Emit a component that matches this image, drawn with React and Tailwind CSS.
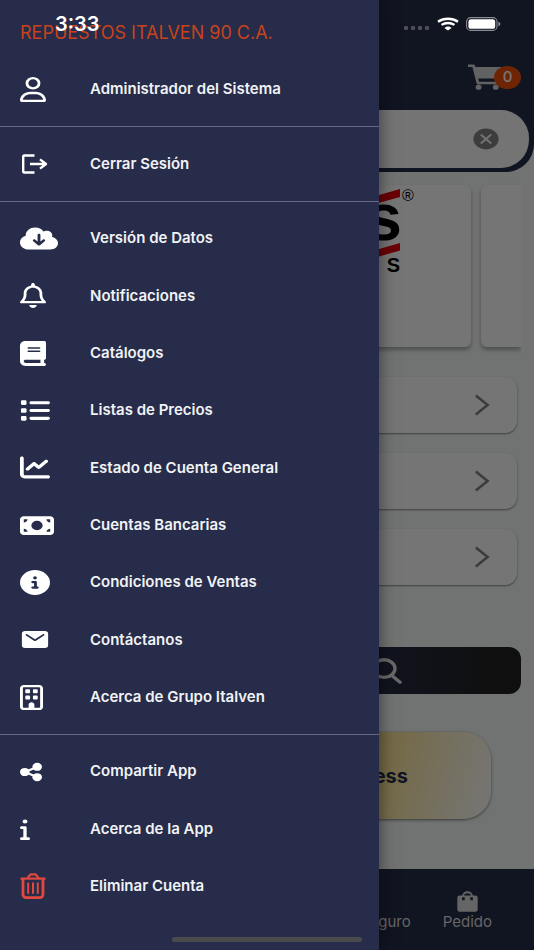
import {
  FaRegUser,
  FaCloudArrowDown,
  FaRegBell,
  FaBook,
  FaList,
  FaChartLine,
  FaMoneyBill,
  FaCircleInfo,
  FaRegBuilding,
  FaInfo,
} from 'react-icons/fa6';
import { IoMail } from 'react-icons/io5';

const LogoutIcon = ({ className }) => (
  <svg viewBox="0 0 30 24" className={className} fill="none" stroke="currentColor" strokeWidth="2.4">
    <path d="M14.500 3.5H4.2a1 1 0 0 0-1 1v15a1 1 0 0 0 1 1H14.500" />
    <path d="M10 12h15.5M20 7.400l6 4.600-6 4.600" strokeLinejoin="round" />
  </svg>
);

const ShareIcon = ({ className }) => (
  <svg viewBox="0 0 22 20" className={className} fill="currentColor" stroke="currentColor">
    <path d="M17 5 5 10l12 5" fill="none" strokeWidth="2.2" />
    <ellipse cx="4.8" cy="10" rx="4.8" ry="4.1" stroke="none" />
    <ellipse cx="17.2" cy="4.8" rx="4.8" ry="4" stroke="none" />
    <ellipse cx="17.2" cy="15.2" rx="4.8" ry="4" stroke="none" />
  </svg>
);

const TrashIcon = ({ className }) => (
  <svg viewBox="0 0 26 26" className={className} fill="none" stroke="currentColor" strokeWidth="2.2">
    <path d="M0.5 5.6h25" />
    <path d="M7.6 5.2 9.8 2.2q.6-.8 1.6-.8h3.4q1 0 1.6.8l2.2 3" />
    <path d="M3 6v15.4a3.2 3.2 0 0 0 3.2 3.2h13.6a3.2 3.2 0 0 0 3.2-3.2V6" strokeWidth="2.8" />
    <path d="M8.2 9.5v11.2M13 9.5v11.2M17.8 9.5v11.2" strokeWidth="2" />
  </svg>
);

const CartIcon = ({ className }) => (
  <svg viewBox="0 0 34 26" className={className} fill="currentColor">
    <path d="M0 .5h5.6q1 0 1.3.9L7.4 3H34l-3.4 11.500H10.2l.9 3.300H30v2.4H10q-1.2 0-1.5-1.1L4.4 3H0z" />
    <ellipse cx="10.6" cy="23.2" rx="2.9" ry="2.6" />
    <ellipse cx="27.8" cy="23.2" rx="2.9" ry="2.6" />
  </svg>
);

const ClearIcon = ({ className }) => (
  <svg viewBox="0 0 26 22" className={className}>
    <ellipse cx="13" cy="11" rx="12.6" ry="10.4" fill="#848484" />
    <path d="M7.8 6.5 18.2 15.5M18.2 6.5 7.8 15.5" stroke="#f4f5f4" strokeWidth="2.2" />
  </svg>
);

const ChevronIcon = ({ className }) => (
  <svg viewBox="0 0 16 22" className={className} fill="none" stroke="#848484" strokeWidth="2.6">
    <path d="M1.8 1.4 13.6 11 1.8 20.6" />
  </svg>
);

const SearchIcon = ({ className }) => (
  <svg viewBox="0 0 32 26" className={className} fill="none" stroke="currentColor" strokeWidth="3.4">
    <ellipse cx="14" cy="10.6" rx="11" ry="8.800" />
    <path d="m21.5 17.200 8.5 7" strokeLinecap="round" />
  </svg>
);

const BagIcon = ({ className }) => (
  <svg viewBox="0 0 21 21" className={className}>
    <path d="M6 8V5.4a4.5 4.2 0 0 1 9 0V8" fill="none" stroke="currentColor" strokeWidth="1.9" />
    <rect x="0.3" y="4.4" width="20.4" height="16.4" rx="2.4" fill="currentColor" />
    <path d="M6.400 6.2v3M14.600 6.2v3" stroke="#262c49" strokeWidth="2.6" />
  </svg>
);

const WifiIcon = ({ className }) => (
  <svg viewBox="0 0 22 14" className={className} fill="none" stroke="currentColor" strokeWidth="2.3">
    <path d="M1 4.8a15 12 0 0 1 20 0M4.5 7.9a10 8 0 0 1 13 0" />
    <path d="M11 13.6 7.4 10.9a5.4 4.4 0 0 1 7.2 0z" fill="currentColor" stroke="none" />
  </svg>
);

const BatteryIcon = ({ className }) => (
  <svg viewBox="0 0 35 14" className={className}>
    <rect x="0.6" y="0.6" width="30.4" height="12.8" rx="4" fill="none" stroke="#8b8d94" strokeWidth="1.1" />
    <rect x="2.4" y="2.2" width="26.8" height="9.6" rx="2.6" fill="#fff" />
    <path d="M32.4 4.8q2 .5 2 2.2t-2 2.2z" fill="#8b8d94" />
  </svg>
);

const menu = [
  [{ label: 'Administrador del Sistema', icon: FaRegUser, size: 'w-[26px] h-[25px]' }],
  [{ label: 'Cerrar Sesión', icon: LogoutIcon, size: 'w-[30px] h-6' }],
  [
    { label: 'Versión de Datos', icon: FaCloudArrowDown, size: 'w-[38px] h-[25px]' },
    { label: 'Notificaciones', icon: FaRegBell, size: 'w-[26px] h-[25px]' },
    { label: 'Catálogos', icon: FaBook, size: 'w-[26px] h-[25px]' },
    { label: 'Listas de Precios', icon: FaList, size: 'w-[30px] h-[25px]' },
    { label: 'Estado de Cuenta General', icon: FaChartLine, size: 'w-[30px] h-[25px]' },
    { label: 'Cuentas Bancarias', icon: FaMoneyBill, size: 'w-[34px] h-[25px]' },
    { label: 'Condiciones de Ventas', icon: FaCircleInfo, size: 'w-[30px] h-[25px]' },
    { label: 'Contáctanos', icon: IoMail, size: 'w-[30px] h-[25px]' },
    { label: 'Acerca de Grupo Italven', icon: FaRegBuilding, size: 'w-[23px] h-[25px]' },
  ],
  [
    { label: 'Compartir App', icon: ShareIcon, size: 'w-[22px] h-5' },
    { label: 'Acerca de la App', icon: FaInfo, size: 'w-[10px] h-[22px]' },
    { label: 'Eliminar Cuenta', icon: TrashIcon, size: 'w-[26px] h-[26px]', danger: true },
  ],
];

const MenuItem = ({ item }) => {
  const Icon = item.icon;
  return (
    <button
      type="button"
      className="flex min-h-[52px] w-full flex-1 items-center pl-5 text-left text-[15px] font-semibold text-[#f1f2f6]"
    >
      <span className={`flex w-[70px] shrink-0 ${item.danger ? 'text-[#e2483d]' : 'text-white'}`}>
        <Icon className={item.size} preserveAspectRatio="none" />
      </span>
      {item.label}
    </button>
  );
};

const Drawer = () => (
  <aside className="absolute inset-y-0 left-0 flex w-[71%] flex-col bg-[#262c49] pb-[35px] shadow-[0_0_16px_rgba(0,0,0,0.5)]">
    <h1 className="flex h-[61px] shrink-0 items-center pt-1 pl-5 text-lg text-[#c8431c]">
      REPUESTOS ITALVEN 90 C.A.
    </h1>
    <nav className="flex flex-1 flex-col">
      {menu.map((group, i) => [
        i > 0 && <hr key={`line-${i}`} className="my-2 border-[#646a84]" />,
        ...group.map((item) => <MenuItem key={item.label} item={item} />),
      ])}
    </nav>
  </aside>
);

const BrandLogo = () => (
  <svg viewBox="0 0 60 100" className="h-[100px] w-[60px] overflow-visible">
    <path d="M0 15.500 40 4v8L0 23zM0 69.500 40 58v7.500L0 77z" fill="#e8000b" />
    <text x="42" y="55" textAnchor="end" fontFamily="Liberation Sans, sans-serif" fontWeight="700" fontSize="66">
      s
    </text>
    <text x="40" y="87" textAnchor="end" fontFamily="Liberation Sans, sans-serif" fontWeight="700" fontSize="20">
      S
    </text>
    <text x="42" y="16" fontFamily="Liberation Sans, sans-serif" fontSize="16">
      ®
    </text>
  </svg>
);

const HomePage = () => (
  <div className="flex min-h-screen flex-col bg-[#f4faf6]">
    <header className="rounded-br-[28px] bg-[#262c49] pr-[5px] pb-1">
      <div className="flex h-[110px] items-start justify-end pt-16 pr-2">
        <button type="button" aria-label="Pedido" className="flex items-center text-[#d5d5d5]">
          <CartIcon className="h-[26px] w-[34px]" />
          <span className="-ml-2 flex h-[23px] w-[27px] items-center justify-center rounded-[50%] bg-[#f0520a] text-[15px] font-medium text-white">
            0
          </span>
        </button>
      </div>
      <div className="flex h-[58px] items-center rounded-r-[28px] bg-[#fafcfa] pr-[30px]">
        <input type="text" aria-label="Buscar" className="h-full min-w-0 flex-1 outline-none" />
        <button type="button" aria-label="Borrar">
          <ClearIcon className="h-[22px] w-[26px]" />
        </button>
      </div>
    </header>

    <main className="flex-1">
      <div className="mr-[13px] flex gap-[10px] overflow-hidden pt-[13px] pb-2">
        <div className="flex h-[162px] flex-1 justify-end rounded-md bg-white pr-[51px] shadow-[0_3px_4px_rgba(0,0,0,0.3)]">
          <BrandLogo />
        </div>
        <div className="h-[162px] w-10 rounded-l-md bg-white shadow-[0_3px_4px_rgba(0,0,0,0.3)]" />
      </div>

      <div className="mt-[22px] mr-[17px] flex flex-col gap-5">
        {[1, 2, 3].map((row) => (
          <button
            key={row}
            type="button"
            aria-label="Abrir"
            className="flex h-14 items-center justify-end rounded-r-xl bg-white pr-[27px] shadow-[0_1px_2px_rgba(0,0,0,0.45)]"
          >
            <ChevronIcon className="h-[22px] w-4" />
          </button>
        ))}
      </div>

      <div className="mt-[62px] pr-[13px]">
        <button
          type="button"
          aria-label="Buscar"
          className="flex h-[47px] w-full items-center justify-end rounded-xl bg-linear-to-r from-[#262c49] from-70% to-[#222222] to-95% pr-[119px] text-[#e4e4e4]"
        >
          <SearchIcon className="h-[26px] w-8" />
        </button>
      </div>

      <div className="mt-[38px] mb-[50px] pr-[43px]">
        <button
          type="button"
          className="flex h-[87px] w-full items-center justify-end rounded-[28px] bg-linear-105 from-[#d8b030] from-50% via-[#ffe9a0] via-78% to-white pr-[83px] text-xl font-bold text-[#262c49] shadow-[0_1px_3px_rgba(0,0,0,0.5)]"
        >
          ess
        </button>
      </div>
    </main>

    <footer className="flex h-[81px] items-start justify-end gap-8 bg-[#262c49] pt-[22px] pr-[42px] text-[15px] leading-5 text-[#dcdcdc]">
      <a href="#seguro" className="pt-[21px]">
        guro
      </a>
      <a href="#pedido" className="flex flex-col items-center">
        <BagIcon className="h-[21px] w-[21px]" />
        Pedido
      </a>
    </footer>
  </div>
);

const StatusBar = () => (
  <div className="absolute inset-x-0 top-0 flex h-12 items-center justify-between pr-[33px] pl-[55px] text-white">
    <span className="text-xl font-semibold">3:33</span>
    <div className="flex items-center">
      <span className="mt-2 mr-2 flex gap-[3px]">
        {[1, 2, 3, 4].map((dot) => (
          <i key={dot} className="h-1 w-1 rounded-[1px] bg-[#4b4d57]" />
        ))}
      </span>
      <WifiIcon className="mr-[7px] h-[14px] w-[22px]" />
      <BatteryIcon className="h-[14px] w-[35px]" />
    </div>
  </div>
);

const App = () => (
  <div className="relative overflow-hidden font-['Inter',sans-serif]">
    <HomePage />
    <div className="absolute inset-0 bg-black/54" />
    <Drawer />
    <StatusBar />
    <div className="absolute bottom-2 left-1/2 h-[5px] w-[190px] -translate-x-1/2 rounded-full bg-[#4b4b4d]" />
  </div>
);

export default App;
